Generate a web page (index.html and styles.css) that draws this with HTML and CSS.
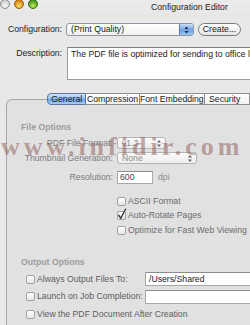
FILE: index.html
```html
<!DOCTYPE html>
<html lang="en">

<head>
    <meta charset="UTF-8">
    <title>Configuration Editor</title>
    <link rel="stylesheet" href="styles.css">
</head>

<body>
    <div class="window">
        <div class="titlebar">
            <div class="lights">
                <span class="light close"></span>
                <span class="light minimize"></span>
                <span class="light zoom"></span>
            </div>
            <div class="title">Configuration Editor</div>
        </div>

        <div class="top-form">
            <div class="row config-row">
                <label class="label">Configuration:</label>
                <div class="controls">
                    <div class="popup aqua">
                        <span class="popup-text">(Print Quality)</span>
                        <span class="popup-cap">
                            <svg width="5" height="8" viewBox="0 0 5 8">
                                <path d="M0.5 3 L2.5 0.5 L4.5 3 Z M0.5 5 L2.5 7.5 L4.5 5 Z" fill="#1c2a44" />
                            </svg>
                        </span>
                    </div>
                    <button class="pill">Create...</button>
                </div>
            </div>
            <div class="row desc-row">
                <label class="label">Description:</label>
                <div class="textarea">The PDF file is optimized for sending to office laser printers.</div>
            </div>
        </div>

        <div class="tabview">
            <div class="tabs">
                <span class="tab first selected">General</span>
                <span class="tab tab-compression">Compression</span>
                <span class="tab tab-fonts">Font Embedding</span>
                <span class="tab tab-security">Security</span>
            </div>
            <div class="panel">
                <div class="section-title">File Options</div>

                <div class="form-row">
                    <span class="form-label">PDF File Format:</span>
                    <div class="small-popup format-popup">
                        <span>v1.3</span>
                        <svg width="4" height="7" viewBox="0 0 4 7">
                            <path d="M0 2.5 L2 0 L4 2.5 Z M0 4.5 L2 7 L4 4.5 Z" fill="#666" />
                        </svg>
                    </div>
                </div>
                <div class="form-row">
                    <span class="form-label">Thumbnail Generation:</span>
                    <div class="small-popup thumb-popup">
                        <span>None</span>
                        <svg width="4" height="7" viewBox="0 0 4 7">
                            <path d="M0 2.5 L2 0 L4 2.5 Z M0 4.5 L2 7 L4 4.5 Z" fill="#666" />
                        </svg>
                    </div>
                </div>
                <div class="form-row res-row">
                    <span class="form-label">Resolution:</span>
                    <div class="res-controls">
                        <div class="field res-field">600</div>
                        <span class="unit">dpi</span>
                    </div>
                </div>

                <div class="check-list">
                    <div class="check-row"><span class="checkbox"></span>ASCII Format</div>
                    <div class="check-row">
                        <span class="checkbox checked">
                            <svg width="10" height="12" viewBox="0 0 10 12">
                                <path d="M1.5 7 L3.8 10.2 L8.8 0.8" fill="none" stroke="#333" stroke-width="1.3" />
                            </svg>
                        </span>Auto-Rotate Pages
                    </div>
                    <div class="check-row"><span class="checkbox"></span>Optimize for Fast Web Viewing</div>
                </div>

                <div class="section-title output-title">Output Options</div>

                <div class="output-list">
                    <div class="output-row">
                        <div class="check-row"><span class="checkbox"></span>Always Output Files To:</div>
                        <div class="field path-field">/Users/Shared</div>
                    </div>
                    <div class="output-row">
                        <div class="check-row"><span class="checkbox"></span>Launch on Job Completion:</div>
                        <div class="field path-field"></div>
                    </div>
                    <div class="output-row">
                        <div class="check-row"><span class="checkbox"></span>View the PDF Document After Creation</div>
                    </div>
                </div>
            </div>
        </div>

        <div class="watermark">www.infidir.com</div>
    </div>
</body>

</html>
```

FILE: styles.css
```css
body {
    margin: 0;
    padding: 0;
    background-color: #e8e8e8;
}

.window {
    position: relative;
    width: 250px;
    height: 325px;
    overflow: hidden;
    background-color: #e8e8e8;
    font-family: "Liberation Sans", Arial, sans-serif;
    font-size: 8.7px;
    line-height: 11px;
    color: #1a1a1a;
}

/* title bar */

.titlebar {
    display: flex;
    height: 17px;
    background: linear-gradient(#ececec, #e6e6e6);
}

.lights {
    display: flex;
    gap: 4px;
    margin-top: -1px;
    margin-left: 0;
}

.light {
    width: 8px;
    height: 8px;
    border-radius: 50%;
    border: 0.5px solid #8c8c8c;
}

.light.close {
    background: radial-gradient(circle at 50% 75%, #fafafa, #cfcfcf 70%);
}

.light.minimize {
    background: radial-gradient(circle at 50% 75%, #f6e45a, #d8841c 70%);
    border-color: #9a5a10;
}

.light.zoom {
    background: radial-gradient(circle at 50% 75%, #c4f05a, #4c9a1c 70%);
    border-color: #2f6a10;
}

.title {
    margin-left: 113px;
    margin-top: 2px;
    white-space: nowrap;
    color: #222;
}

/* configuration + description */

.top-form {
    display: flex;
    flex-direction: column;
}

.row {
    display: grid;
    grid-template-columns: 62px 1fr;
    column-gap: 4px;
}

.label {
    text-align: right;
    white-space: nowrap;
}

.config-row {
    margin-top: 6px;
    height: 13px;
    align-items: center;
}

.controls {
    display: flex;
    gap: 4px;
}

.popup {
    display: flex;
    align-items: center;
    width: 128px;
    height: 13px;
    box-sizing: border-box;
    border: 1px solid #8e96a4;
    border-radius: 3px;
    background: linear-gradient(#ffffff, #f0f0f0);
    overflow: hidden;
}

.popup-text {
    flex: 1;
    padding-left: 4px;
    white-space: nowrap;
}

.popup-cap {
    display: flex;
    align-items: center;
    justify-content: center;
    width: 13px;
    height: 100%;
    border-left: 1px solid #5f7fb0;
    background: linear-gradient(#c8def8, #6da2e4 55%, #9cc4f2);
}

.pill {
    width: 43px;
    height: 13px;
    padding: 0;
    border: 1px solid #7a7a7a;
    border-radius: 7px;
    background: linear-gradient(#ffffff, #e4e4e4);
    font-family: inherit;
    font-size: 8.7px;
    line-height: 11px;
    color: #1a1a1a;
}

.desc-row {
    margin-top: 11px;
    height: 33px;
}

.desc-row .label {
    padding-top: 1px;
}

.textarea {
    margin-left: 1px;
    margin-right: -20px;
    box-sizing: border-box;
    height: 33px;
    padding: 1px 3px;
    border: 1px solid #9c9c9c;
    border-top-color: #7e7e7e;
    background-color: #ffffff;
    white-space: nowrap;
    overflow: hidden;
}

/* tab view */

.tabview {
    margin-top: 13px;
}

.tabs {
    position: relative;
    z-index: 1;
    display: flex;
    margin-left: 47px;
    height: 12px;
}

.tab {
    box-sizing: border-box;
    height: 12px;
    border: 1px solid #8f8f8f;
    border-left: none;
    background: linear-gradient(#ffffff, #f1f1f1);
    text-align: center;
    white-space: nowrap;
    line-height: 10px;
    color: #1a1a1a;
}

.tab.first {
    border-left: 1px solid #6d7f9c;
    border-radius: 4px 0 0 4px;
}

.tab.selected {
    width: 45px;
    border-color: #5d75a0;
    background: linear-gradient(#d4e6fb, #8fbaee 50%, #6ea4e6 55%, #a9cdf6);
}

.tab-compression {
    width: 61px;
}

.tab-fonts {
    width: 75px;
}

.tab-security {
    width: 45px;
    flex-shrink: 0;
    text-align: left;
    padding-left: 4px;
}

.panel {
    margin-top: -6px;
    margin-left: 6px;
    margin-right: -10px;
    height: 240px;
    padding-top: 22px;
    border-left: 1px solid #a7a7a7;
    border-top: 1px solid #a7a7a7;
    border-top-left-radius: 6px;
    background-color: #e1e1e1;
    color: #7c7c7c;
}

.section-title {
    padding-left: 14px;
    height: 11px;
    font-weight: bold;
    color: #9c9c9c;
}

.form-row {
    display: grid;
    grid-template-columns: 106px auto;
    column-gap: 4px;
    align-items: center;
    height: 14px;
    margin-top: 1px;
}

.section-title + .form-row {
    margin-top: 3px;
}

.form-label {
    text-align: right;
    white-space: nowrap;
}

.small-popup {
    display: flex;
    align-items: center;
    justify-content: space-between;
    box-sizing: border-box;
    height: 12px;
    padding: 0 4px 0 4px;
    border: 1px solid #b4b4b4;
    border-radius: 3px;
    background: linear-gradient(#fbfbfb, #ededed);
    color: #8a8a8a;
}

.format-popup {
    width: 49px;
}

.thumb-popup {
    width: 80px;
}

.res-row {
    margin-top: 5px;
    height: 15px;
}

.res-controls {
    display: flex;
    align-items: center;
    gap: 5px;
}

.field {
    box-sizing: border-box;
    border: 1px solid #a9a9a9;
    border-top-color: #8c8c8c;
    background-color: #ffffff;
    white-space: nowrap;
    overflow: hidden;
}

.res-field {
    width: 36px;
    height: 13px;
    padding: 0 2px;
    line-height: 11px;
    color: #444;
}

.unit {
    color: #8c8c8c;
}

.check-list {
    margin-top: 9px;
    margin-left: 110px;
}

.check-row {
    display: flex;
    align-items: center;
    gap: 2px;
    height: 14.5px;
    white-space: nowrap;
    color: #6c6c6c;
}

.checkbox {
    position: relative;
    flex-shrink: 0;
    width: 9px;
    height: 9px;
    box-sizing: border-box;
    border: 1px solid #a2a2a2;
    border-radius: 2px;
    background: linear-gradient(#ffffff, #e6e6e6);
}

.checkbox svg {
    position: absolute;
    left: -1px;
    top: -4px;
}

.output-title {
    margin-top: 19px;
}

.output-list {
    margin-top: 3px;
    padding-left: 19px;
}

.output-row {
    display: grid;
    grid-template-columns: 119px 1fr;
    align-items: center;
    height: 17.5px;
}

.output-row .check-row {
    color: #5e5e5e;
}

.path-field {
    height: 14px;
    padding: 0 3px;
    line-height: 12px;
    color: #222;
}

/* watermark over the screenshot */

.watermark {
    position: absolute;
    left: 1px;
    top: 134px;
    font-family: "Liberation Serif", "Times New Roman", serif;
    font-weight: bold;
    font-size: 26px;
    line-height: 26px;
    letter-spacing: 4px;
    white-space: nowrap;
    color: rgba(140, 90, 85, 0.5);
    pointer-events: none;
}
```
